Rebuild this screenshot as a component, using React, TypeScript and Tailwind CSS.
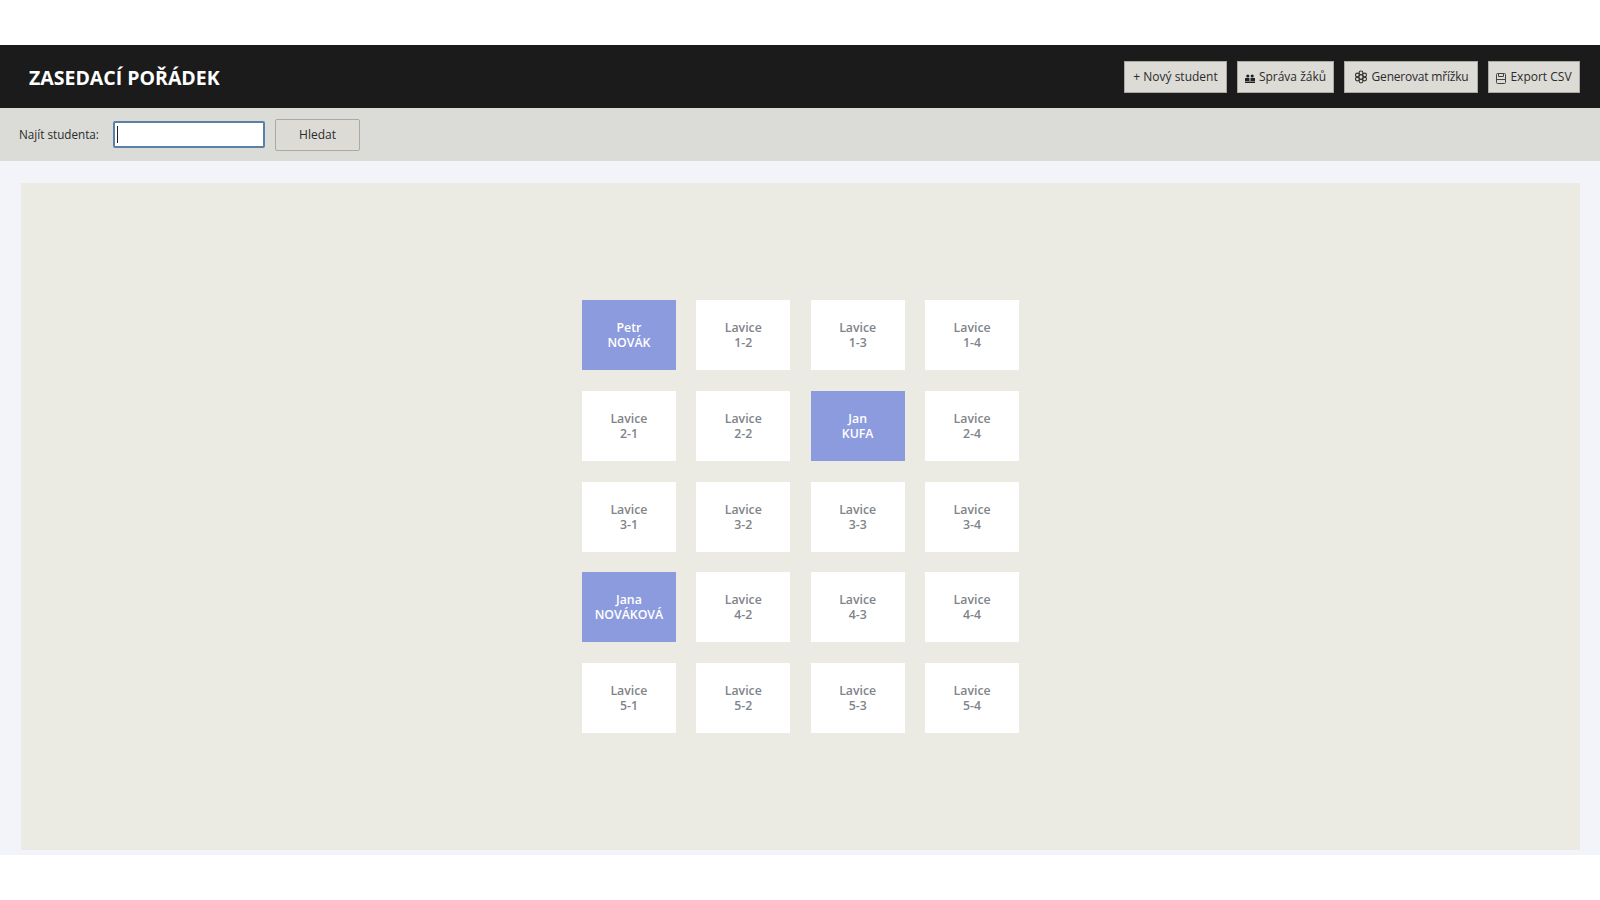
import React from "react";

const rows = [1, 2, 3, 4, 5];
const cols = [1, 2, 3, 4];

// seats that already have a student
const taken: Record<string, [string, string]> = {
  "1-1": ["Petr", "NOVÁK"],
  "2-3": ["Jan", "KUFA"],
  "4-1": ["Jana", "NOVÁKOVÁ"],
};

const PeopleIcon = () => (
  <svg width="10" height="9" viewBox="0 0 10 9" className="mt-[3px] shrink-0" fill="#222">
    <circle cx="2.8" cy="2" r="1.6" />
    <circle cx="7.2" cy="2" r="1.6" />
    <rect x="0" y="4" width="4.5" height="3" />
    <rect x="5.500" y="4" width="4.5" height="3" />
    <rect x="0" y="7.500" width="10" height="1.5" />
  </svg>
);

const GearIcon = () => (
  <svg width="14" height="14" viewBox="0 0 14 14" className="shrink-0" fill="none" stroke="#333" strokeWidth="1.1">
    <circle cx="7" cy="7" r="2.2" />
    <circle cx="7" cy="2.900" r="1.9" />
    <circle cx="7" cy="11.100" r="1.9" />
    <circle cx="3.400" cy="5" r="1.9" />
    <circle cx="10.600" cy="5" r="1.9" />
    <circle cx="3.400" cy="9" r="1.9" />
    <circle cx="10.600" cy="9" r="1.9" />
  </svg>
);

const SaveIcon = () => (
  <svg width="10" height="11" viewBox="0 0 10 11" className="mt-[3px] shrink-0" fill="none" stroke="#444" strokeWidth="1">
    <path d="M.5 1.500a1 1 0 0 1 1-1h7a1 1 0 0 1 1 1v8a1 1 0 0 1-1 1h-7a1 1 0 0 1-1-1z" />
    <path d="M2.500.5v3h5v-3M.5 6.500h9" />
  </svg>
);

const HeaderButton = ({ width, children }: { width: string; children: React.ReactNode }) => (
  <button className={`${width} h-8 flex items-center justify-center gap-1 bg-[#dcdbd6] border border-[#aaa9a4] text-[12px] text-[#2b2b2b] whitespace-nowrap`}>
    {children}
  </button>
);

export default function App() {
  return (
    <div className="w-[1600px] h-[900px] bg-white pt-[45px] pb-[45px] font-['Open_Sans','Noto_Sans',sans-serif] overflow-hidden">
      <div className="h-[810px] flex flex-col bg-[#f2f4f9]">
        <header className="h-[63px] shrink-0 flex items-center justify-between pl-[29px] pr-5 bg-[#1b1b1b]">
          <h1 className="pt-[3px] text-[19.500px] font-bold text-white">ZASEDACÍ POŘÁDEK</h1>
          <div className="flex items-center gap-[10px]">
            <HeaderButton width="w-[103px]">+ Nový student</HeaderButton>
            <HeaderButton width="w-[97px]">
              <PeopleIcon />
              Správa žáků
            </HeaderButton>
            <HeaderButton width="w-[134px]">
              <GearIcon />
              <span className="tracking-[-0.2px]">Generovat mřížku</span>
            </HeaderButton>
            <HeaderButton width="w-[92px]">
              <SaveIcon />
              Export CSV
            </HeaderButton>
          </div>
        </header>

        <div className="h-[53px] shrink-0 flex items-center pl-[19px] bg-[#dbdcd8]">
          <label className="w-[94px] pt-px text-[11.700px] text-[#2b2b2b]">Najít studenta:</label>
          <div className="w-[152px] h-[27px] flex items-center pl-[2px] bg-white border-2 border-[#5b7fa6] rounded-[2px]">
            <div className="w-px h-[17px] bg-[#222]" />
          </div>
          <button className="ml-[10px] w-[85px] h-8 bg-[#dcdbd6] border border-[#aaa9a4] rounded-[2px] text-[12px] text-[#2b2b2b]">
            Hledat
          </button>
        </div>

        <main className="flex-1 flex pt-[22px] pl-[21px] pr-5 pb-[5px]">
          <div className="flex-1 flex items-center justify-center bg-[#ebebe3]">
            <div className="grid grid-cols-[repeat(4,94px)] auto-rows-[70px] gap-x-[20.400px] gap-y-[20.700px]">
              {rows.map((r) =>
                cols.map((c) => {
                  const student = taken[`${r}-${c}`];
                  return (
                    <div
                      key={`${r}-${c}`}
                      className={`flex flex-col items-center justify-center text-[12.300px] leading-[15px] font-semibold ${
                        student ? "bg-[#8c9bdd] text-white" : "bg-white text-[#7f8488]"
                      }`}
                    >
                      <span>{student ? student[0] : "Lavice"}</span>
                      <span>{student ? student[1] : `${r}-${c}`}</span>
                    </div>
                  );
                })
              )}
            </div>
          </div>
        </main>
      </div>
    </div>
  );
}
